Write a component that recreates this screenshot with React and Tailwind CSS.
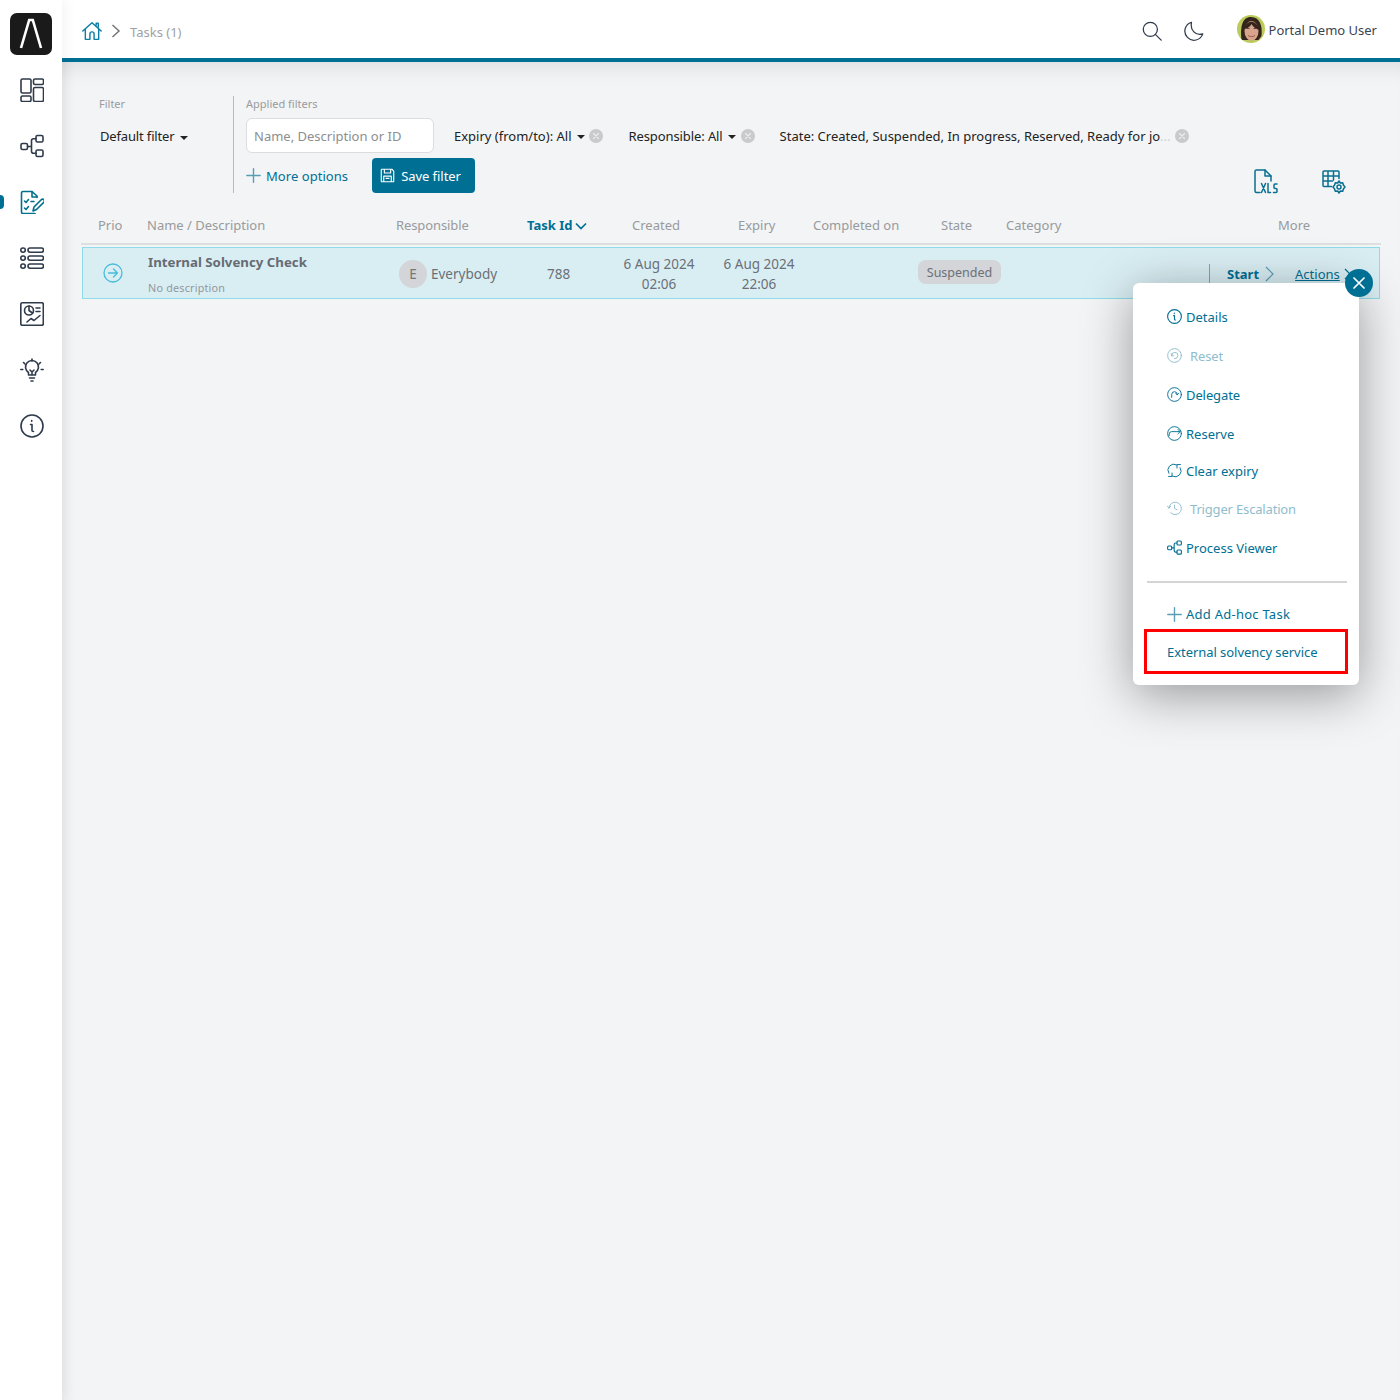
import React from "react";

const S = ({ children, size = 24, vb = "0 0 24 24", className = "", sw = 1.6 }) => (
  <svg width={size} height={size} viewBox={vb} fill="none" stroke="currentColor" strokeWidth={sw} strokeLinecap="round" strokeLinejoin="round" className={className}>
    {children}
  </svg>
);

const Dash = () => (
  <S>
    <rect x="1" y="1" width="10" height="14" rx="1.500" />
    <rect x="1" y="18" width="10" height="5.500" rx="1.500" />
    <rect x="13.500" y="1" width="10" height="5.500" rx="1.500" />
    <rect x="13.500" y="9.500" width="10" height="14" rx="1.500" />
  </S>
);
const Flow = ({ size = 24, sw = 1.6 }) => (
  <S size={size} sw={sw}>
    <rect x="1" y="9.500" width="6.500" height="6" rx="1.500" />
    <rect x="16" y="1.500" width="7" height="6.500" rx="1.500" />
    <rect x="16" y="16" width="7" height="6.500" rx="1.500" />
    <path d="M7.500 12.500h4M16 4.800h-2.500a2 2 0 0 0-2 2v10.500a2 2 0 0 0 2 2H16" />
  </S>
);
const TaskEdit = () => (
  <S>
    <path d="M17 7.500V6l-5-4.500H3A1.500 1.500 0 0 0 1.500 3v19A1.500 1.500 0 0 0 3 23.500h12" />
    <path d="M12 1.500V7h5" />
    <path d="M4.500 11l1.500 1.500 2.500-3M4.500 18l1.500 1.500 2.500-3M11 11.500h3" />
    <path d="M13 21l1-4 7.500-7.500a1.800 1.800 0 0 1 2.500 2.500L16.500 19.500z" />
  </S>
);
const ListI = () => (
  <S>
    <rect x=".8" y="2" width="4.500" height="4.200" rx="2.100" />
    <rect x=".8" y="10" width="4.500" height="4.200" rx="2.100" />
    <rect x=".8" y="18" width="4.500" height="4.200" rx="2.100" />
    <rect x="8" y="2" width="15.500" height="4.200" rx="2.100" />
    <rect x="8" y="10" width="15.500" height="4.200" rx="2.100" />
    <rect x="8" y="18" width="15.500" height="4.200" rx="2.100" />
  </S>
);
const Report = () => (
  <S>
    <rect x=".8" y=".8" width="22.500" height="22.500" rx="1.500" />
    <circle cx="9" cy="8.500" r="4.500" />
    <path d="M9 4v4.500l3.500 2.500M16 6h4M16 9.500h4M7 20l4-3.500 3 2 6-5" />
  </S>
);
const Bulb = () => (
  <S>
    <path d="M8.500 17v-2.500a6.500 6.500 0 1 1 7 0V17zM9.500 20h5M11 23h2M10 12l2 2 2-2M12 14v3" />
    <path d="M12 1v2M3.500 4.500 5 6M20.500 4.500 19 6M.8 11.500h2M21.200 11.500h2" />
  </S>
);
const Info = ({ size = 24, sw = 1.6 }) => (
  <S size={size} sw={sw}>
    <circle cx="12" cy="12" r="11" />
    <path d="M10.500 10.500h1.500v6c0 .8.500 1 1.500 1M11.700 6.500v.8" />
  </S>
);

const Avatar = () => (
  <svg width="28" height="28" viewBox="0 0 28 28">
    <circle cx="14" cy="14" r="14" fill="#bccb5b" />
    <clipPath id="av"><circle cx="14" cy="14" r="14" /></clipPath>
    <g clipPath="url(#av)">
      <path d="M4.500 25C3 12 5 2 14 2s11.500 9 10.500 19l-3 4z" fill="#33241c" />
      <ellipse cx="14.500" cy="16" rx="7" ry="10" fill="#d8a48c" />
      <path d="M7 14c1-5 5-8 9-7 3 1 5 3 6 8-3-1-6-3-7.500-6-1 2-4 5-7.500 5z" fill="#33241c" />
      <path d="M9.500 13.500h3M16.500 13.500h3" stroke="#5b4a42" strokeWidth="1" />
      <path d="M11 20.500c2 1.500 5 1.500 7 0" stroke="#9e5a50" strokeWidth="1" fill="none" />
    </g>
  </svg>
);

const Caret = () => <span className="inline-block ml-[5px] align-middle w-0 h-0 border-x-[4px] border-x-transparent border-t-[4px] border-t-[#222]" />;

const ClearX = () => (
  <span className="flex items-center justify-center w-[14px] h-[14px] rounded-full bg-[#c9cacc] shrink-0">
    <svg width="8" height="8" viewBox="0 0 8 8" stroke="#eceded" strokeWidth="1.200" strokeLinecap="round"><path d="M1.500 1.500l5 5M6.500 1.500l-5 5" /></svg>
  </span>
);

const Plus = ({ cls = "" }) => (
  <svg width="15" height="15" viewBox="0 0 15 15" stroke="currentColor" strokeWidth="1.400" strokeLinecap="round" className={cls}><path d="M7.500 .8v13.400M.8 7.500h13.400" /></svg>
);

const Item = ({ h, icon, label, disabled, gap = "gap-[4px]", track = "" }) => (
  <div className={`flex items-center ${gap} pl-[34px] ${h} ${disabled ? "text-[#8fbdcc]" : "text-[#006f94]"}`}>
    <span className="w-[15px] h-[15px] flex items-center justify-center shrink-0 -mt-[3px]">{icon}</span>
    <span className={track}>{label}</span>
  </div>
);

const I15 = ({ children }) => <S size={15} sw={1.500}>{children}</S>;

const Popup = () => (
  <div className="absolute left-[1133px] top-[283px] w-[226px] h-[402px] bg-white rounded-md shadow-[0_10px_50px_rgba(0,0,0,0.38)] text-[13px] z-10">
    <div className="pt-[15px]">
      <Item h="h-[39px]" label="Details" icon={<Info size={15} sw={1.800} />} />
      <Item h="h-[39px]" disabled gap="gap-[8px]" track="tracking-[-0.1px]" label="Reset" icon={<I15><circle cx="12" cy="12" r="11" /><path d="M7 9v3.500h3.500M7.500 12a5 5 0 1 1 4.500 5" /></I15>} />
      <Item h="h-[39px]" track="tracking-[-0.1px]" label="Delegate" icon={<I15><circle cx="12" cy="12" r="11" /><path d="M7.500 16.500V12a4.500 4.500 0 0 1 4.500-4.500 4.500 4.500 0 0 1 4.500 4.500M14 10.500l2.500 2 2-2.500" /></I15>} />
      <Item h="h-[39px]" label="Reserve" icon={<I15><circle cx="12" cy="12" r="11" /><path d="M3.500 15.500V13a4 4 0 0 1 4-4h13M17.500 5.500 21 9l-3.500 3.500" /></I15>} />
      <Item h="h-[35px]" label="Clear expiry" icon={<I15><path d="M3 16.500A9.500 9.500 0 0 1 15.500 3M21 7.500A9.500 9.500 0 0 1 8.500 21" /><path d="M16 8V2.500h5.500M8 16v5.500H2.500" /></I15>} />
      <Item h="h-[41px]" disabled gap="gap-[8px]" track="tracking-[-0.17px]" label="Trigger Escalation" icon={<I15><path d="M3 12a10 10 0 1 1 3 7M.5 8l2.500 3 3-2.500M12 6.500V12l4 2" /></I15>} />
      <Item h="h-[37px]" label="Process Viewer" icon={<Flow size={15} sw={1.800} />} />
    </div>
    <div className="h-[2px] bg-[#d5d5d6] ml-[14px] mr-[12px] mt-[14px]" />
    <div className="flex items-center gap-[4px] pl-[34px] h-[28px] mt-[18px] text-[#006f94]">
      <Plus cls="text-[#5a9db5] -mt-[2px]" />
      <span className="tracking-[0.25px]">Add Ad-hoc Task</span>
    </div>
    <div className="ml-[11px] w-[204px] h-[45px] border-[3px] border-[#ff0000] flex items-center pl-[20px] pt-[2px] text-[#006f94] tracking-[-0.05px]">
      External solvency service
    </div>
  </div>
);

const th = "text-[#999a9c] text-[13px]";

export default function App() {
  return (
    <div className="relative flex w-[1400px] h-[1400px] bg-[#f2f4f6] font-['Noto_Sans','Open_Sans',sans-serif] text-[13px] overflow-hidden">
      <aside className="w-[62px] shrink-0 bg-white flex flex-col items-start shadow-[2px_0_14px_rgba(0,0,0,0.06)] z-[1]">
        <div className="ml-[10px] mt-[13px] w-[42px] h-[42px] rounded-[7px] bg-[#1a1a1a]">
          <svg width="42" height="42" viewBox="0 0 42 42" fill="none" stroke="#fff" strokeWidth="2.600"><path d="M11 35 19.200 7h3.600L31 35" /></svg>
        </div>
        <nav className="flex flex-col w-full mt-[7px] text-[#2f3a4a]">
          {[<Dash />, <Flow />, <TaskEdit />, <ListI />, <Report />, <Bulb />, <Info />].map((ic, i) => (
            <div key={i} className={`relative h-[56px] flex items-center pl-[20px] ${i === 2 ? "text-[#00708f]" : ""}`}>
              {i === 2 && <span className="absolute left-0 top-[21px] w-[4px] h-[14px] rounded-r-full bg-[#006f94]" />}
              {ic}
            </div>
          ))}
        </nav>
      </aside>

      <div className="flex-1 flex flex-col min-w-0">
        <header className="h-[62px] shrink-0 bg-white border-b-[4px] border-[#006f94] flex items-center pl-[20px] pr-[23px]">
          <svg width="20" height="20" viewBox="0 0 24 24" fill="none" stroke="#0a7ea4" strokeWidth="1.700" strokeLinejoin="round" strokeLinecap="round" className="mt-[3px]">
            <path d="M1 12 12 2l11 10M4 10v12h5.500v-6.500a2.500 2.500 0 0 1 5 0V22H20V10M17 5V2.500h2.500v5" />
          </svg>
          <svg width="10" height="14" viewBox="0 0 10 14" fill="none" stroke="#777" strokeWidth="1.500" className="ml-[9px] mt-[4px]"><path d="M1.500 1 8 7l-6.500 6" /></svg>
          <span className="ml-[9px] mt-[8px] text-[#a0a2a5] text-[13px]">Tasks (1)</span>
          <div className="ml-auto flex items-center text-[#2f3a4a]">
            <span className="mt-[4px]"><S size={20} sw={1.500}><circle cx="10" cy="10" r="8.500" /><path d="M16 16l7 7" /></S></span>
            <span className="mt-[4px] ml-[22px]"><S size={20} sw={1.500}><path d="M9 1.500a11 11 0 1 0 13.500 14C14 18 7 11 9 1.500z" /></S></span>
            <span className="ml-[33px]"><Avatar /></span>
            <span className="ml-[4px] mt-[4px] text-[13px] text-[#3c4452]">Portal Demo User</span>
          </div>
        </header>

        <main className="flex-1 pl-[19px] pr-[19px] pt-[34px] shadow-[inset_0_22px_22px_-18px_rgba(0,0,0,0.1),inset_14px_0_14px_-12px_rgba(0,0,0,0.05)]">
          <div className="flex h-[97px]">
            <div className="w-[153px] shrink-0 border-r border-[#b9babc] pl-[18px]">
              <div className="text-[11px] text-[#9a9b9d] leading-[16px]">Filter</div>
              <div className="mt-[14px] pl-[1px] leading-[20px] text-[#222] tracking-[-0.15px]">Default filter<Caret /></div>
            </div>
            <div className="flex-1 pl-[12px] flex flex-col">
              <div className="text-[11px] text-[#9a9b9d] leading-[16px]">Applied filters</div>
              <div className="flex items-center mt-[6px] h-[35px] text-[#222]">
                <div className="w-[188px] h-[35px] bg-white border border-[#dcdddf] rounded-md flex items-center pl-[7px] pt-[2px] text-[#8c8e91]">Name, Description or ID</div>
                <span className="ml-[20px] pt-[2px]">Expiry (from/to): All<Caret /></span>
                <span className="ml-[4px]"><ClearX /></span>
                <span className="ml-[26px] pt-[2px] tracking-[-0.1px]">Responsible: All<Caret /></span>
                <span className="ml-[5px]"><ClearX /></span>
                <span className="ml-[25px] pt-[2px] whitespace-nowrap">State: Created, Suspended, In progress, Reserved, Ready for jo<span className="text-[#d0d1d3]">...</span></span>
                <span className="ml-[4px]"><ClearX /></span>
              </div>
              <div className="flex items-center mt-[5px] h-[35px]">
                <span className="flex items-center gap-[5px] text-[#006f94] pt-[2px] tracking-[0.05px]"><Plus cls="text-[#5a9db5] -mt-[2px]" />More options</span>
                <button className="ml-[24px] w-[103px] h-[35px] bg-[#006f94] rounded-[4px] text-white flex items-center pl-[8px] gap-[6px] text-[13px] tracking-[-0.05px]">
                  <svg width="15" height="15" viewBox="0 0 24 24" fill="none" stroke="#fff" strokeWidth="1.800" strokeLinejoin="round"><path d="M2 3a1 1 0 0 1 1-1h16l3 3v16a1 1 0 0 1-1 1H3a1 1 0 0 1-1-1zM7 2v6h10V2M6 22v-9h12v9M9 16.500h6" /></svg>
                  <span className="pt-[2px]">Save filter</span>
                </button>
                <div className="ml-auto flex items-center gap-[44px] pr-[35px] mt-[12px] text-[#0a6f92]">
                  <svg width="24" height="25" viewBox="0 0 24 25" fill="none" stroke="currentColor" strokeWidth="1.500" strokeLinejoin="round" strokeLinecap="round">
                    <path d="M6 23.500H2.500a1.500 1.500 0 0 1-1.500-1.500V2.500A1.500 1.500 0 0 1 2.500 1h8.500l6 6v5" /><path d="M11 1v6h6" />
                    <path d="M7.500 14.500l4 9M11.500 14.500l-4 9M14 14.500v9h2.500M23 15h-2a1 1 0 0 0-1 1v2.500a1 1 0 0 0 1 1h1a1 1 0 0 1 1 1v2a1 1 0 0 1-1 1h-2.500" />
                  </svg>
                  <svg width="24" height="24" viewBox="0 0 24 24" fill="none" stroke="currentColor" strokeWidth="1.500" strokeLinejoin="round" strokeLinecap="round">
                    <path d="M9.500 16.500H2a1 1 0 0 1-1-1V2a1 1 0 0 1 1-1h14a1 1 0 0 1 1 1v6.500M1 6h16M1 11h9.500M6 1v15.500M11.500 1v9" />
                    <circle cx="17" cy="17" r="2" /><path d="M17 11l1.300 2 2.400-.3.700 2.300 1.600 2-1.600 2-.7 2.300-2.400-.3L17 23l-1.300-2-2.400.3-.700-2.300-1.600-2 1.600-2 .7-2.300 2.400.3z" />
                  </svg>
                </div>
              </div>
            </div>
          </div>

          <div className="flex items-center h-[38px] mt-[14px] border-b-2 border-[#dedfe1] pt-[2px]">
            <div className={`${th} w-[66px] pl-[17px]`}>Prio</div>
            <div className={`${th} w-[249px]`}>Name / Description</div>
            <div className={`${th} w-[131px] tracking-[-0.1px]`}>Responsible</div>
            <div className="w-[105px] font-bold text-[#006f94] flex items-center">Task Id
              <svg width="12" height="8" viewBox="0 0 12 8" fill="none" stroke="#006f94" strokeWidth="1.700" className="ml-[2px]"><path d="M1 1.500l5 5 5-5" /></svg>
            </div>
            <div className={`${th} w-[106px]`}>Created</div>
            <div className={`${th} w-[75px]`}>Expiry</div>
            <div className={`${th} w-[128px]`}>Completed on</div>
            <div className={`${th} w-[65px]`}>State</div>
            <div className={`${th} w-[272px]`}>Category</div>
            <div className={th}>More</div>
          </div>

          <div className="flex items-center h-[52px] mt-[2px] ml-[1px] mr-[1px] bg-[#d9eef3] border border-[#8edbe9] text-[#6b7078] text-[13.500px]">
            <div className="w-[65px] shrink-0 pl-[20px]">
              <svg width="20" height="20" viewBox="0 0 20 20" fill="none" stroke="#46bcdc" strokeWidth="1.300" strokeLinecap="round" strokeLinejoin="round"><circle cx="10" cy="10" r="9" /><path d="M5.500 10h9M10.500 6l4 4-4 4" /></svg>
            </div>
            <div className="w-[251px] shrink-0 flex flex-col pt-[2px]">
              <span className="font-bold text-[#666b73] text-[13.250px] leading-[18px]">Internal Solvency Check</span>
              <span className="text-[10.800px] tracking-[0.2px] text-[#94979b] leading-[14px] mt-[10px]">No description</span>
            </div>
            <div className="w-[148px] shrink-0 flex items-center pt-[2px]">
              <span className="w-[28px] h-[28px] rounded-full bg-[#d3d5d8] flex items-center justify-center text-[#777]">E</span>
              <span className="ml-[4px]">Everybody</span>
            </div>
            <div className="w-[62px] shrink-0 pt-[2px]">788</div>
            <div className="w-[100px] shrink-0 text-center leading-[20px] pt-[2px]">6 Aug 2024<br />02:06</div>
            <div className="w-[100px] shrink-0 text-center leading-[20px] pt-[2px]">6 Aug 2024<br />22:06</div>
            <div className="ml-[109px] w-[83px] h-[24px] -mt-[2px] pt-[2px] shrink-0 rounded-lg bg-[#d3d5d8] flex items-center justify-center text-[12.500px]">Suspended</div>
            <div className="ml-[208px] h-[20px] border-l border-[#9a9ea2] pl-[17px] flex items-center font-bold text-[13px] text-[#006f94] mt-[2px] shrink-0">
              <span className="pt-[2px]">Start</span>
              <svg width="10" height="16" viewBox="0 0 10 16" fill="none" stroke="#5a9db5" strokeWidth="1.200" className="ml-[6px]"><path d="M1 1l7 7-7 7" /></svg>
            </div>
            <span className="ml-[20px] underline text-[#006f94] text-[13px] mt-[4px]">Actions</span>
            <svg width="8" height="12" viewBox="0 0 8 12" fill="none" stroke="#006f94" strokeWidth="1.200" className="ml-[4px] mt-[2px]"><path d="M1 1l5 5-5 5" /></svg>
          </div>
        </main>
      </div>

      <Popup />
      <button className="absolute left-[1345px] top-[269px] w-[28px] h-[28px] rounded-full bg-[#006f94] flex items-center justify-center z-20">
        <svg width="12" height="12" viewBox="0 0 12 12" stroke="#fff" strokeWidth="1.700" strokeLinecap="round"><path d="M1 1l10 10M11 1 1 11" /></svg>
      </button>
    </div>
  );
}
